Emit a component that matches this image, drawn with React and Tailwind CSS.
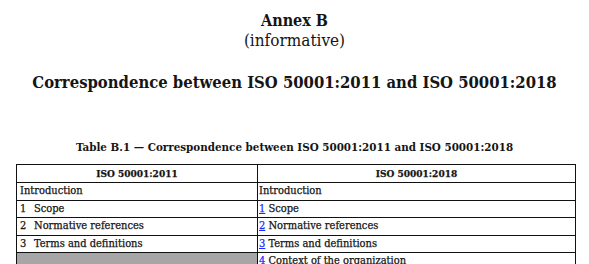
export default function App() {
  const rows = [
    { l: [null, "Introduction"], r: [null, "Introduction"] },
    { l: ["1", "Scope"], r: ["1", "Scope"] },
    { l: ["2", "Normative references"], r: ["2", "Normative references"] },
    { l: ["3", "Terms and definitions"], r: ["3", "Terms and definitions"] },
    { l: null, r: ["4", "Context of the organization", true] },
  ];
  const serif = "font-['DejaVu_Serif',serif] font-stretch-condensed";
  return (
    <div className={`w-[589px] h-[264px] overflow-hidden bg-white text-[#151515] ${serif}`}>
      <div className="pt-[12px] text-center">
        <div className="text-[16px] leading-[18px] font-bold">Annex B</div>
        <div className="text-[17px] leading-[20px]">(informative)</div>
        <div className="mt-[23px] text-[16.5px] leading-[20px] font-bold">
          Correspondence between ISO 50001:2011 and ISO 50001:2018
        </div>
        <div className="mt-[46px] text-[11.5px] leading-[16px] font-bold">
          Table B.1 — Correspondence between ISO 50001:2011 and ISO 50001:2018
        </div>
      </div>
      <table className="mt-[9px] ml-[16px] w-[559px] border-collapse text-[11px] leading-[14px] table-fixed [-webkit-text-stroke:0.25px_#151515]">
        <colgroup>
          <col className="w-[241px]" />
          <col className="w-[318px]" />
        </colgroup>
        <thead>
          <tr className="h-[18px]">
            <th className="border border-[#111] font-bold text-[10px] text-center p-0">ISO 50001:2011</th>
            <th className="border border-[#111] font-bold text-[10px] text-center p-0">ISO 50001:2018</th>
          </tr>
        </thead>
        <tbody>
          {rows.map((row, i) => (
            <tr key={i} className="h-[17.5px]">
              {row.l ? (
                <td className="border border-[#111] px-[3px] py-0 align-middle">
                  {row.l[0] ? (
                    <span>
                      <span className="inline-block w-[14px]">{row.l[0]}</span>
                      {row.l[1]}
                    </span>
                  ) : (
                    row.l[1]
                  )}
                </td>
              ) : (
                <td className="border border-[#111] bg-[#a6a6a6] p-0"></td>
              )}
              <td className="border border-[#111] px-[1px] py-0 align-middle">
                {row.r[0] ? (
                  <span>
                    <span
                      className={
                        row.r[2]
                          ? "text-[#1a2cff] [-webkit-text-stroke:0.25px_#1a2cff]"
                          : "text-[#1a2cff] underline [-webkit-text-stroke:0.25px_#1a2cff]"
                      }
                    >
                      {row.r[0]}
                    </span>{" "}
                    {row.r[1]}
                  </span>
                ) : (
                  row.r[1]
                )}
              </td>
            </tr>
          ))}
        </tbody>
      </table>
    </div>
  );
}
